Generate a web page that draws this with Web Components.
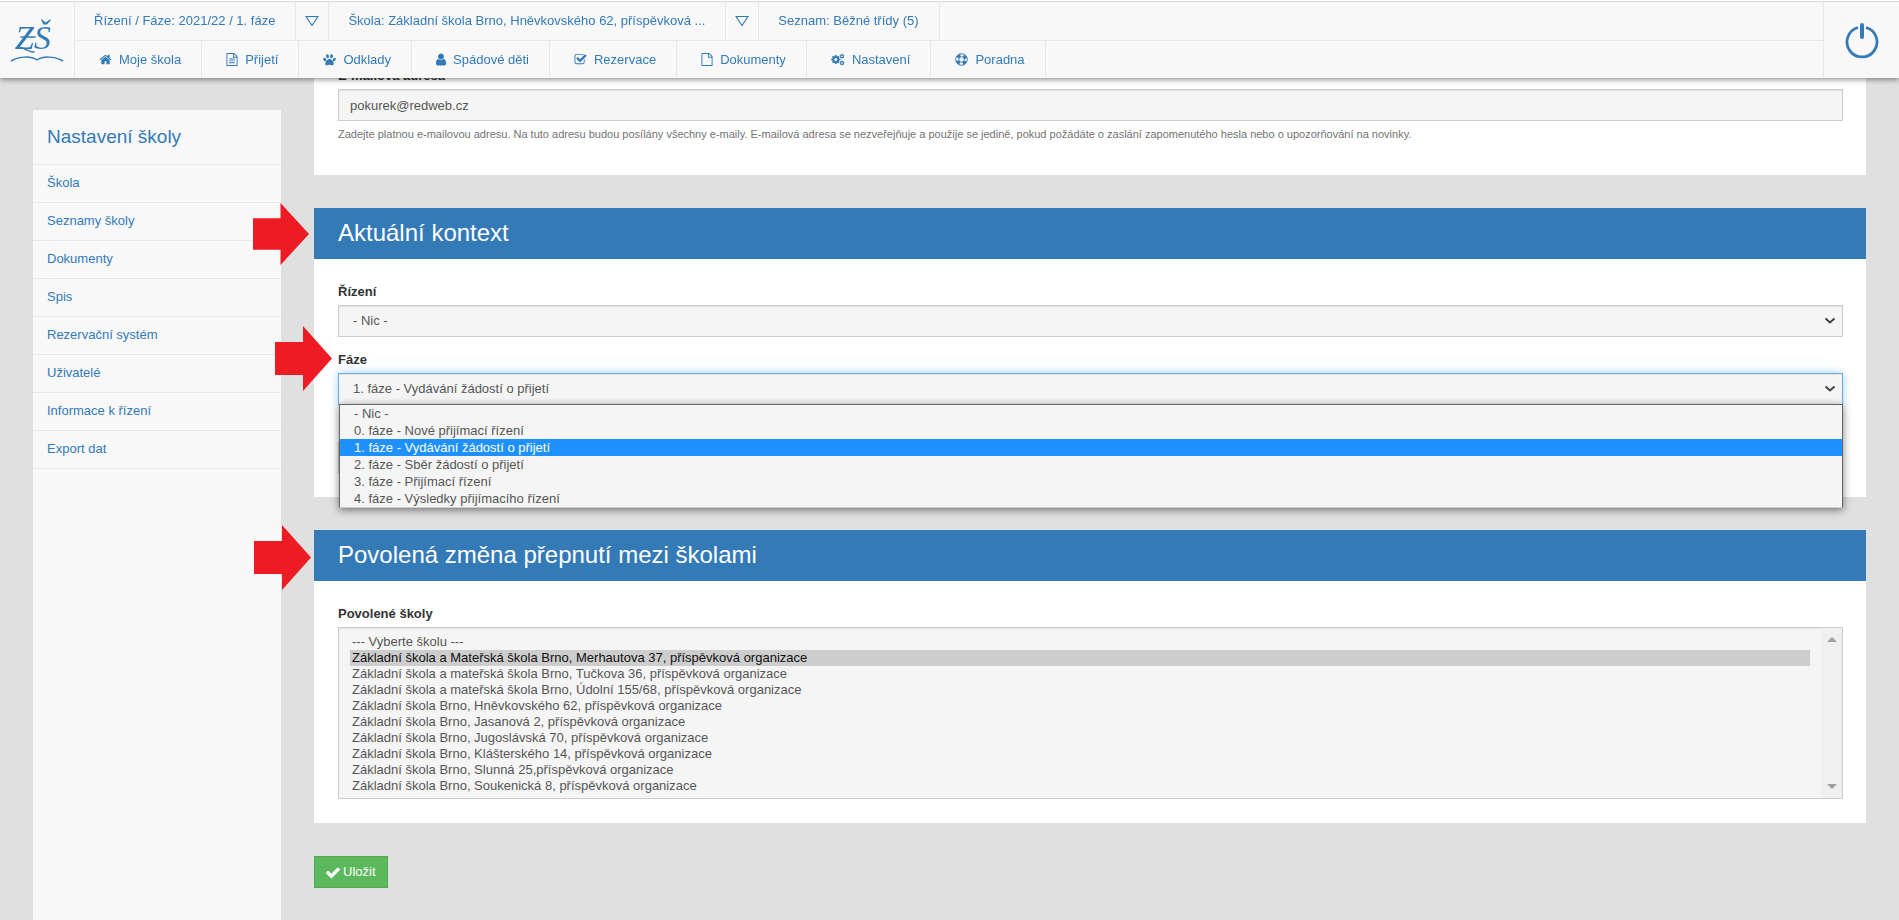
<!DOCTYPE html>
<html lang="cs">
<head>
<meta charset="utf-8">
<title>Nastavení školy</title>
<style>
html{background:#e0e0e0}
body{margin:0;font:13px/18px "Liberation Sans",Arial,sans-serif;color:#333;--blue:#337ab7;--line:#e7e7e7;--pale:#f8f8f8;--field:#f5f5f5}
</style>
</head>
<body>
<app-shell>
  <app-header slot="header">
    <context-cell slot="context" href="#rizeni" menu>Řízení / Fáze: 2021/22 / 1. fáze</context-cell>
    <context-cell slot="context" href="#skola" menu>Škola: Základní škola Brno, Hněvkovského 62, příspěvková ...</context-cell>
    <context-cell slot="context" href="#seznam">Seznam: Běžné třídy (5)</context-cell>
    <nav-item slot="nav" href="#moje" icon="home">Moje škola</nav-item>
    <nav-item slot="nav" href="#prijeti" icon="fileText">Přijetí</nav-item>
    <nav-item slot="nav" href="#odklady" icon="paw">Odklady</nav-item>
    <nav-item slot="nav" href="#deti" icon="user">Spádové děti</nav-item>
    <nav-item slot="nav" href="#rezervace" icon="checkSquare">Rezervace</nav-item>
    <nav-item slot="nav" href="#dokumenty" icon="file">Dokumenty</nav-item>
    <nav-item slot="nav" href="#nastaveni" icon="cogs">Nastavení</nav-item>
    <nav-item slot="nav" href="#poradna" icon="ring">Poradna</nav-item>
  </app-header>
  <side-menu slot="side" heading="Nastavení školy">
    <side-link href="#s1">Škola</side-link>
    <side-link href="#s2">Seznamy školy</side-link>
    <side-link href="#s3">Dokumenty</side-link>
    <side-link href="#s4">Spis</side-link>
    <side-link href="#s5">Rezervační systém</side-link>
    <side-link href="#s6">Uživatelé</side-link>
    <side-link href="#s7">Informace k řízení</side-link>
    <side-link href="#s8">Export dat</side-link>
  </side-menu>
  <form-card>
    <text-field label="E-mailová adresa" value="pokurek@redweb.cz" help="Zadejte platnou e-mailovou adresu. Na tuto adresu budou posílány všechny e-maily. E-mailová adresa se nezveřejňuje a použije se jedině, pokud požádáte o zaslání zapomenutého hesla nebo o upozorňování na novinky."></text-field>
  </form-card>
  <form-card heading="Aktuální kontext" marked="small">
    <select-field label="Řízení" options="- Nic -"></select-field>
    <select-field label="Fáze" open marked selected="2" options="- Nic -|0. fáze - Nové přijímací řízení|1. fáze - Vydávání žádostí o přijetí|2. fáze - Sběr žádostí o přijetí|3. fáze - Přijímací řízení|4. fáze - Výsledky přijímacího řízení"></select-field>
    <select-field></select-field>
  </form-card>
  <form-card heading="Povolená změna přepnutí mezi školami" marked="large">
    <list-field label="Povolené školy" selected="1" options="--- Vyberte školu ---|Základní škola a Mateřská škola Brno, Merhautova 37, příspěvková organizace|Základní škola a mateřská škola Brno, Tučkova 36, příspěvková organizace|Základní škola a mateřská škola Brno, Údolní 155/68, příspěvková organizace|Základní škola Brno, Hněvkovského 62, příspěvková organizace|Základní škola Brno, Jasanová 2, příspěvková organizace|Základní škola Brno, Jugoslávská 70, příspěvková organizace|Základní škola Brno, Klášterského 14, příspěvková organizace|Základní škola Brno, Slunná 25,příspěvková organizace|Základní škola Brno, Soukenická 8, příspěvková organizace"></list-field>
  </form-card>
  <save-button>Uložit</save-button>
</app-shell>

<script>
const FILE = 'M1596 380q28 28 48 76t20 88v1152q0 40-28 68t-68 28h-1344q-40 0-68-28t-28-68v-1600q0-40 28-68t68-28h896q40 0 88 20t76 48zm-444-244v376h376q-10-29-22-41l-313-313q-12-12-41-22zm384 1528v-1024h-416q-40 0-68-28t-28-68v-416h-768v1536h1280z';
const gear = (x, y, r, hole, n) => {
  let teeth = '';
  for (let i = 0; i < n; i++) teeth += `<rect x="${x - r * .24}" y="${y - r * 1.3}" width="${r * .48}" height="${r * .6}" transform="rotate(${i * 360 / n} ${x} ${y})"/>`;
  return `<circle cx="${x}" cy="${y}" r="${(r + hole) / 2}" fill="none" stroke="currentColor" stroke-width="${r - hole}"/>${teeth}`;
};
const ICONS = {
  home: [13, '0 0 1792 1792', '<path d="M1472 992v480q0 26-19 45t-45 19h-384v-384h-256v384h-384q-26 0-45-19t-19-45v-480q0-1 .5-3t.5-3l575-474 575 474q1 2 1 6zm223-69l-62 74q-8 9-21 11h-3q-13 0-21-7l-692-577-692 577q-12 8-24 7-13-2-21-11l-62-74q-8-10-7-23.500t11-21.500l719-599q32-26 76-26t76 26l244 204v-195q0-14 9-23t23-9h192q14 0 23 9t9 23v408l219 182q10 8 11 21.500t-7 23.500z"/>'],
  file: [12, '128 0 1536 1792', `<path d="${FILE}"/>`],
  fileText: [12, '128 0 1536 1792', `<path d="${FILE}m-1024-864q0-14 9-23t23-9h704q14 0 23 9t9 23v64q0 14-9 23t-23 9h-704q-14 0-23-9t-9-23v-64zm736 224q14 0 23 9t9 23v64q0 14-9 23t-23 9h-704q-14 0-23-9t-9-23v-64q0-14 9-23t23-9h704zm0 256q14 0 23 9t9 23v64q0 14-9 23t-23 9h-704q-14 0-23-9t-9-23v-64q0-14 9-23t23-9h704z"/>`],
  paw: [13, '0 0 26 26', '<ellipse cx="9" cy="6.500" rx="2.900" ry="4.200" transform="rotate(-12 9 6.500)"/><ellipse cx="17" cy="6.500" rx="2.900" ry="4.200" transform="rotate(12 17 6.500)"/><ellipse cx="3.500" cy="13" rx="2.700" ry="3.700" transform="rotate(-25 3.500 13)"/><ellipse cx="22.500" cy="13" rx="2.700" ry="3.700" transform="rotate(25 22.500 13)"/><path d="M13 12c4 0 8.500 5.500 8.500 9.300 0 2.300-1.500 3.200-3.500 3.200-2 0-3.200-1.100-5-1.100s-3 1.100-5 1.100-3.500-.9-3.500-3.200C4.500 17.500 9 12 13 12z"/>'],
  user: [10, '256 128 1280 1536', '<path d="M1536 1399q0 109-62.500 187t-150.500 78h-854q-88 0-150.500-78t-62.500-187q0-85 8.500-160.500t31.500-152 58.500-131 94-89 134.500-34.500q131 128 313 128t313-128q76 0 134.500 34.500t94 89 58.500 131 31.500 152 8.500 160.500zm-256-887q0 159-112.500 271.500t-271.500 112.500-271.500-112.500-112.500-271.500 112.500-271.500 271.500-112.500 271.500 112.500 112.500 271.500z"/>'],
  checkSquare: [13, '0 0 1792 1792', '<path d="M1472 930v318q0 119-84.500 203.500t-203.500 84.500h-832q-119 0-203.500-84.500t-84.500-203.500v-832q0-119 84.500-203.500t203.500-84.500h832q63 0 117 25 15 7 18 23 3 17-9 29l-49 49q-10 10-23 10-3 0-9-2-23-6-45-6h-832q-66 0-113 47t-47 113v832q0 66 47 113t113 47h832q66 0 113-47t47-113v-254q0-13 9-22l64-64q10-10 23-10 6 0 12 3 20 8 20 29zm231-489l-814 814q-24 24-57 24t-57-24l-430-430q-24-24-24-57t24-57l110-110q24-24 57-24t57 24l263 263 647-647q24-24 57-24t57 24l110 110q24 24 24 57t-24 57z"/>'],
  cogs: [14, '0 0 28 26', gear(9.500, 13, 7, 3, 8) + gear(22, 6.500, 3.800, 1.700, 6) + gear(22, 20, 3.800, 1.700, 6)],
  ring: [13, '0 0 26 26', '<g fill="none" stroke="currentColor"><circle cx="13" cy="13" r="11.500" stroke-width="2"/><circle cx="13" cy="13" r="5.500" stroke-width="2"/><circle cx="13" cy="13" r="8.500" stroke-width="6" stroke-dasharray="6.800 6.550" stroke-dashoffset="-3.300"/></g>'],
  check: [14, '120 240 1552 1290', '<path d="M1671 566q0 40-28 68l-724 724-136 136q-28 28-68 28t-68-28l-136-136-362-362q-28-28-28-68t28-68l136-136q28-28 68-28t68 28l294 295 656-657q28-28 68-28t68 28l136 136q28 28 28 68z"/>']
};
const icon = (name) => {
  const [w, box, body] = ICONS[name];
  return `<svg width="${w}" height="13" viewBox="${box}" fill="currentColor" aria-hidden="true">${body}</svg>`;
};
const define = (name, render) => customElements.define(name, class extends HTMLElement {
  constructor() { super(); this.attachShadow({ mode: 'open' }); }
  connectedCallback() { this.shadowRoot.innerHTML = render(this); }
});
const attr = (el, name) => el.getAttribute(name) || '';
const options = (el) => attr(el, 'options').split('|').map((text, i) =>
  `<option${String(i) === el.getAttribute('selected') ? ' selected' : ''}>${text}</option>`).join('');
const FIELD = `
  :host{display:block;position:relative}
  *{box-sizing:border-box}
  label{display:block;font-weight:700;margin-bottom:4px;height:18px}
  input,select{display:block;width:100%;height:32px;margin:0;border:1px solid #ccc;border-radius:0;background:var(--field);color:#555;font:inherit;box-shadow:inset 0 1px 1px #00000013;outline:0}
`;

define('red-arrow', () => `
  <style>:host{display:block;position:absolute;z-index:3;width:57px;height:65px}svg{display:block;width:100%;height:100%}</style>
  <svg viewBox="0 0 57 65" preserveAspectRatio="none" aria-hidden="true"><path fill="#ed1c24" d="M0 16h28V0l29 32.500L28 65V49H0z"/></svg>`);

define('app-shell', () => `
  <style>
    :host{display:block}
    .page{display:flex;gap:33px;min-height:100vh;padding:0 33px;box-sizing:border-box}
    aside{flex:0 0 248px;margin-top:110px;background:var(--pale)}
    main{flex:1;min-width:0;padding:43px 0 32px;display:flex;flex-direction:column;gap:33px;align-items:stretch}
  </style>
  <slot name="header"></slot>
  <div class="page"><aside><slot name="side"></slot></aside><main><slot></slot></main></div>`);

define('app-header', () => `
  <style>
    :host{display:grid;grid-template-columns:74px 1fr 75px;position:fixed;inset:0 0 auto;z-index:10;height:78px;box-sizing:border-box;border-top:1px solid #fff;background:var(--pale);box-shadow:0 2px 5px #00000066;color:var(--blue)}
    :host::before{content:"";position:absolute;inset:0 0 auto;height:1px;background:#d5dbd8}
    a{color:inherit;display:flex;align-items:center;justify-content:center}
    .rows{border:solid var(--line);border-width:0 1px;display:grid;grid-template-rows:40px 37px}
    .row{display:flex}
    .row:first-child{border-bottom:1px solid var(--line);padding-top:1px}
    svg{display:block}
    text{font:italic 34px "Liberation Serif",serif}
  </style>
  <a href="#home" aria-label="Domů"><svg width="54" height="50" viewBox="0 0 54 50" fill="currentColor">
    <text x="5" y="34">ZŠ</text>
    <path d="M11 22h14M6 33c8-3 11 5 18 4" fill="none" stroke="currentColor" stroke-width="1.500" stroke-linecap="round"/>
    <path d="M1 46c9-5 20-5 26-1 6-4 17-4 26 1" fill="none" stroke="currentColor" stroke-width="1.500"/></svg></a>
  <div class="rows"><div class="row"><slot name="context"></slot></div><nav class="row"><slot name="nav"></slot></nav></div>
  <a href="#logout" aria-label="Odhlásit"><svg width="34" height="38" viewBox="0 0 34 38" fill="none" stroke="currentColor">
    <path d="M13 6.500a15 15 0 1 0 8 0" stroke-width="2.800"/><path d="M17 4v12" stroke-width="4" stroke-linecap="round"/></svg></a>`);

define('context-cell', (el) => `
  <style>
    :host{display:flex}
    a{display:flex;align-items:center;color:inherit;text-decoration:none;padding:0 20px 0 19px;border-right:1px solid var(--line)}
    button{width:33px;padding:0;border:0;border-right:1px solid var(--line);background:none;color:inherit;display:flex;align-items:center;justify-content:center;box-sizing:border-box}
  </style>
  <a href="${attr(el, 'href')}"><slot></slot></a>
  ${el.hasAttribute('menu') ? '<button type="button" aria-label="Změnit"><svg width="14" height="12" viewBox="0 0 14 12"><path d="M1 1.500h12L7 10.500z" fill="none" stroke="currentColor" stroke-width="1.200"/></svg></button>' : ''}`);

define('nav-item', (el) => `
  <style>
    :host{display:flex}
    a{display:flex;align-items:center;gap:7px;color:inherit;text-decoration:none;padding:0 20px 0 24px;border-right:1px solid var(--line)}
  </style>
  <a href="${attr(el, 'href')}">${icon(attr(el, 'icon'))}<span><slot></slot></span></a>`);

define('side-menu', (el) => `
  <style>
    :host{display:block;color:var(--blue)}
    h2{margin:0;padding:14px;font-size:19px;line-height:26px;font-weight:400;border-bottom:1px solid var(--line)}
  </style>
  <h2>${attr(el, 'heading')}</h2><nav><slot></slot></nav>`);

define('side-link', (el) => `
  <style>:host{display:block}a{display:block;padding:9px 14px 10px;border-bottom:1px solid var(--line);color:inherit;text-decoration:none}</style>
  <a href="${attr(el, 'href')}"><slot></slot></a>`);

define('form-card', (el) => `
  <style>
    :host{display:block;position:relative;background:#fff}
    h2{margin:0;padding:10px 24px 11px;background:var(--blue);color:#fff;font-size:24px;line-height:30px;font-weight:400}
    .body{padding:24px 23px 24px 24px;display:flex;flex-direction:column;gap:14px}
    red-arrow{left:-60px;top:-5px}
    red-arrow.small{left:-61px;width:56px;height:62px}
  </style>
  ${el.hasAttribute('heading') ? `<h2>${attr(el, 'heading')}</h2>` : ''}
  <div class="body"><slot></slot></div>
  ${el.hasAttribute('marked') ? `<red-arrow class="${attr(el, 'marked')}"></red-arrow>` : ''}`);

define('text-field', (el) => `
  <style>${FIELD} input{padding:0 11px} p{margin:5px 0 9px;font-size:11px;line-height:16px;color:#737373}</style>
  <label for="f">${attr(el, 'label')}</label><input id="f" type="email" value="${attr(el, 'value')}" aria-describedby="h">
  <p id="h">${attr(el, 'help')}</p>`);

define('select-field', (el) => {
  const open = el.hasAttribute('open');
  const rows = attr(el, 'options').split('|');
  return `
  <style>${FIELD}
    .box{position:relative}
    select{appearance:none;padding:0 32px 0 14px}
    .box>svg{position:absolute;right:7px;top:12px;pointer-events:none}
    .open select{border-color:#66afe9;box-shadow:inset 0 1px 1px #00000013,0 0 8px #66afe999}
    ul{position:absolute;z-index:2;left:1px;right:0;top:31px;margin:0;padding:0;list-style:none;background:var(--field);color:#555;border:1px solid #666;border-bottom-color:#ccc;box-shadow:0 2px 8px #00000080}
    li{padding:0 14px;line-height:17px}
    li[aria-selected=true]{background:#1e90ff;color:#fff}
    red-arrow{left:-63px;top:-25px}
  </style>
  <label for="f">${attr(el, 'label')}</label>
  <div class="box${open ? ' open' : ''}"><select id="f"${el.hasAttribute('label') ? '' : ' aria-label="Seznam"'}>${options(el)}</select>
  <svg width="12" height="8" viewBox="0 0 12 8" aria-hidden="true"><path d="M1.500 1.500 6 5.500l4.500-4" fill="none" stroke="#444" stroke-width="2"/></svg>
  ${open ? `<ul role="listbox">${rows.map((r, i) => `<li role="option" aria-selected="${String(i) === attr(el, 'selected')}">${r}</li>`).join('')}</ul>` : ''}</div>
  ${el.hasAttribute('marked') ? '<red-arrow></red-arrow>' : ''}`;
});

define('list-field', (el) => `
  <style>${FIELD}
    .box{display:flex;border:1px solid #ccc;background:var(--field);box-shadow:inset 0 1px 1px #00000013}
    select{flex:1;min-width:0;height:auto;border:0;padding:6px 11px 4px;background:none;box-shadow:none;overflow:hidden;scrollbar-width:none}
    option{padding:0 2px;height:16px;min-height:16px;line-height:16px}
    option:checked{background:#cdcdcd;color:#101010}
    .rail{flex:0 0 21px;background:#f0f0f0;display:flex;flex-direction:column;justify-content:space-between;align-items:center;padding:9px 0}
    svg{display:block}
  </style>
  <label for="f">${attr(el, 'label')}</label>
  <div class="box"><select id="f" multiple size="10">${options(el)}</select>
  <div class="rail" aria-hidden="true"><svg width="10" height="5"><path d="M0 5 5 0l5 5z" fill="#a0a0a0"/></svg><svg width="10" height="5"><path d="M0 0l5 5 5-5z" fill="#a0a0a0"/></svg></div></div>`);

define('save-button', () => `
  <style>
    :host{display:block}
    button{display:flex;align-items:center;gap:3px;height:32px;padding:0 11px;border:1px solid #4cae4c;border-radius:0;background:#5cb85c;color:#fff;font:inherit}
  </style>
  <button type="submit">${icon('check')}<span><slot></slot></span></button>`);
</script>
</body>
</html>
